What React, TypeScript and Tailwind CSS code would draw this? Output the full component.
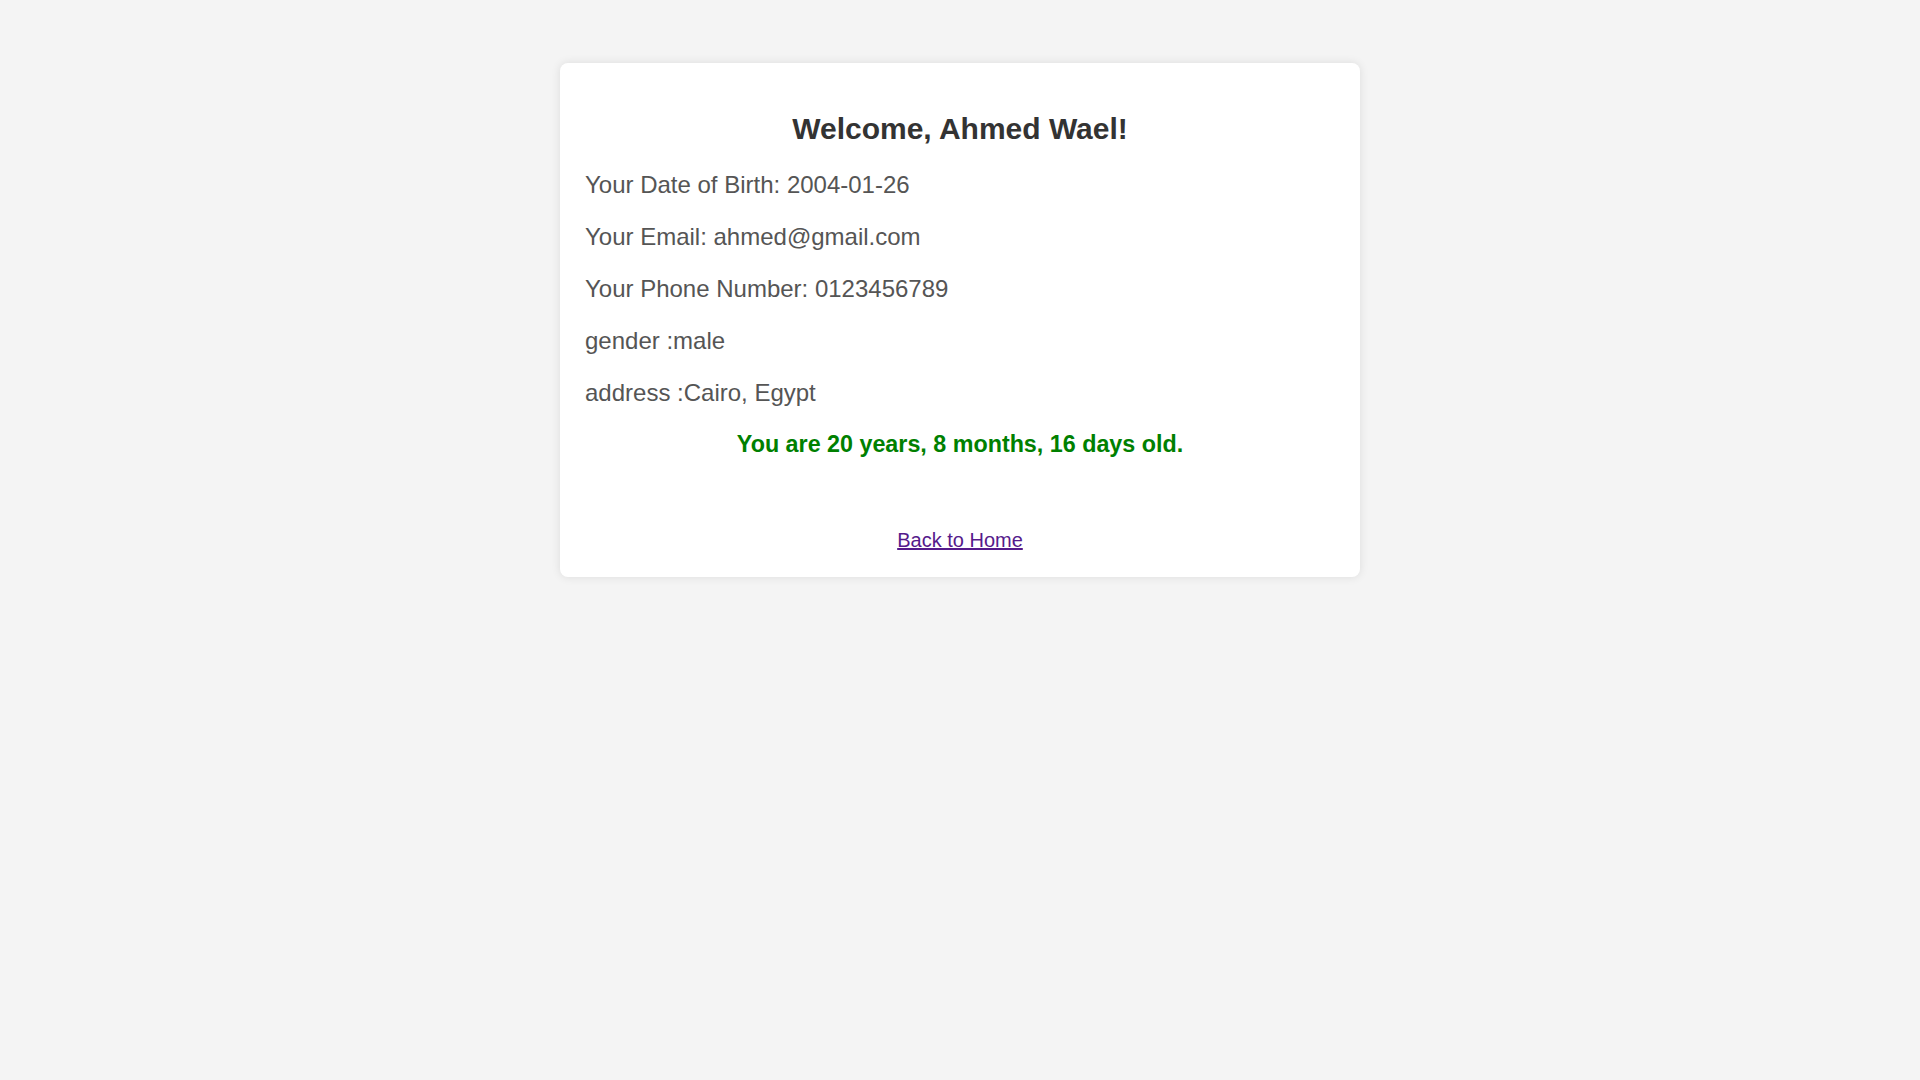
export default function App() {
  return (
    <div
      className="min-h-screen bg-[#f4f4f4] pt-[63px] pb-10"
      style={{ fontFamily: '"Liberation Sans", Arial, sans-serif' }}
    >
      <div className="mx-auto w-[800px] rounded-lg bg-white p-[25px] shadow-[0_0_10px_rgba(0,0,0,0.1)]">
        <h2 className="mt-[24px] mb-[25px] text-center text-[30px] font-bold leading-[normal] text-[#333]">
          Welcome, Ahmed Wael!
        </h2>
        <p className="my-[24px] text-[24px] leading-[normal] text-[#555]">Your Date of Birth: 2004-01-26</p>
        <p className="my-[24px] text-[24px] leading-[normal] text-[#555]">Your Email: ahmed@gmail.com</p>
        <p className="my-[24px] text-[24px] leading-[normal] text-[#555]">Your Phone Number: 0123456789</p>
        <p className="my-[24px] text-[24px] leading-[normal] text-[#555]">gender :male</p>
        <p className="my-[24px] text-[24px] leading-[normal] text-[#555]">address :Cairo, Egypt</p>
        <p className="mt-[24px] mb-0 text-center text-[23.3px] font-bold leading-[normal] text-[#008000]">
          You are 20 years, 8 months, 16 days old.
        </p>
        <div className="mt-[71px] text-center text-[20px] leading-[normal]">
          <a href="#" className="text-[#551a8b] underline">
            Back to Home
          </a>
        </div>
      </div>
    </div>
  );
}
